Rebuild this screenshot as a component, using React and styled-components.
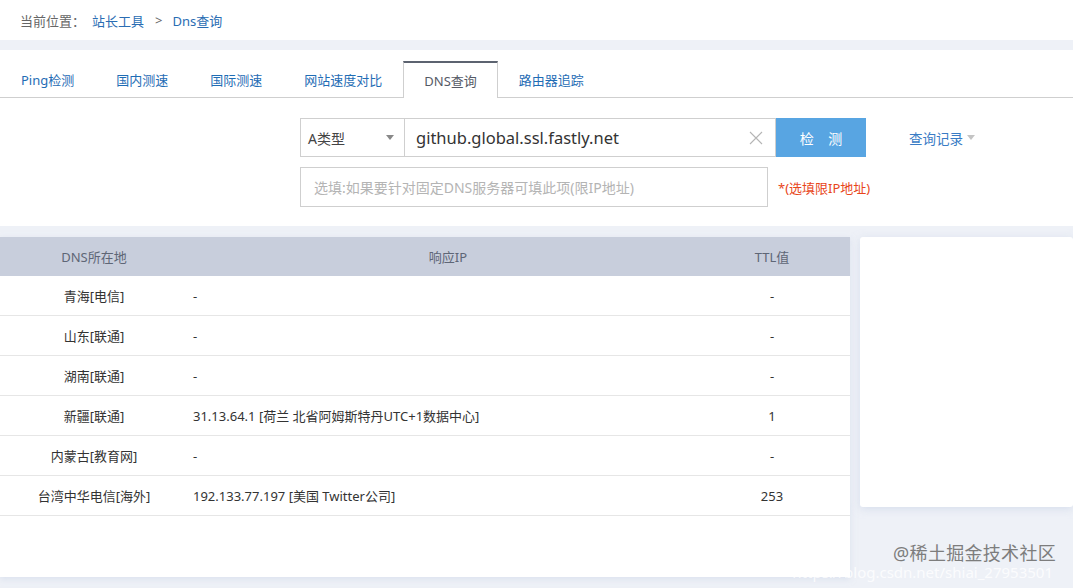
import React from 'react'
import styled, { createGlobalStyle } from 'styled-components'

const Global = createGlobalStyle`
    html, body {
        margin : 0;
        padding : 0;
        background : #eef1f7;
        font-family : "Noto Sans", "Noto Sans CJK SC", sans-serif;
        font-size : 13px;
        color : #333;
    }
`

const tabs = ['Ping检测', '国内测速', '国际测速', '网站速度对比', 'DNS查询', '路由器追踪']

const rows = [
    { loc: '青海[电信]', ip: '-', ttl: '-' },
    { loc: '山东[联通]', ip: '-', ttl: '-' },
    { loc: '湖南[联通]', ip: '-', ttl: '-' },
    { loc: '新疆[联通]', ip: '31.13.64.1 [荷兰 北省阿姆斯特丹UTC+1数据中心]', ttl: '1' },
    { loc: '内蒙古[教育网]', ip: '-', ttl: '-' },
    { loc: '台湾中华电信[海外]', ip: '192.133.77.197 [美国 Twitter公司]', ttl: '253' },
]

function App() {
    return (
        <Page>
            <Global />
            <Crumbs>
                <CrumbLabel>当前位置：</CrumbLabel>
                <CrumbLink>站长工具</CrumbLink>
                <CrumbSep>&gt;</CrumbSep>
                <CrumbLink>Dns查询</CrumbLink>
            </Crumbs>

            <ToolPanel>
                <TabBar>
                    {tabs.map(t => (
                        <Tab key={t} active={t === 'DNS查询'}>{t}</Tab>
                    ))}
                </TabBar>
                <Form>
                    <FormRow>
                        <TypeSelect>
                            A类型
                            <Caret />
                        </TypeSelect>
                        <HostInput>
                            <HostText>github.global.ssl.fastly.net</HostText>
                            <svg width="14" height="14" viewBox="0 0 14 14">
                                <path d="M1 1 L13 13 M13 1 L1 13" stroke="#b5b5b5" strokeWidth="1.1" fill="none" />
                            </svg>
                        </HostInput>
                        <CheckButton>检&nbsp;&nbsp;&nbsp;&nbsp;测</CheckButton>
                        <History>
                            查询记录
                            <Caret light />
                        </History>
                    </FormRow>
                    <FormRow>
                        <ServerInput>选填:如果要针对固定DNS服务器可填此项(限IP地址)</ServerInput>
                        <Hint>*(选填限IP地址)</Hint>
                    </FormRow>
                </Form>
            </ToolPanel>

            <Results>
                <TablePanel>
                    <HeadRow>
                        <HeadCell>DNS所在地</HeadCell>
                        <HeadCell>响应IP</HeadCell>
                        <HeadCell>TTL值</HeadCell>
                    </HeadRow>
                    {rows.map(r => (
                        <BodyRow key={r.loc}>
                            <Cell>{r.loc}</Cell>
                            <Cell left>{r.ip}</Cell>
                            <Cell>{r.ttl}</Cell>
                        </BodyRow>
                    ))}
                </TablePanel>
                <SidePanel />
                <Watermark>
                    <Url>https://blog.csdn.net/shiai_27953501</Url>
                    <Mark>@稀土掘金技术社区</Mark>
                </Watermark>
            </Results>
        </Page>
    )
}

export default App

const Page = styled.div`
    width : 1073px;
    height : 588px;
    overflow : hidden;
`

const Crumbs = styled.div`
    height : 40px;
    background : #fff;
    display : flex;
    align-items : center;
    padding-left : 20px;
    margin-bottom : 10px;
`

const CrumbLabel = styled.span`
    color : #666;
    margin-right : 7px;
`

const CrumbLink = styled.span`
    color : #2a6db3;
`

const CrumbSep = styled.span`
    color : #666;
    margin : 0 10px 0 11px;
`

const ToolPanel = styled.div`
    background : #fff;
    height : 176px;
    padding-top : 11px;
    box-sizing : border-box;
    margin-bottom : 11px;
`

const TabBar = styled.div`
    display : flex;
    height : 36px;
    border-bottom : 1px solid #cfcfcf;
`

const Tab = styled.div`
    padding : 0 21px 0 21px;
    display : flex;
    align-items : center;
    font-size : 13px;
    box-sizing : border-box;
    height : 36px;
    color : ${p => p.active ? '#555a66' : '#1f6db5'};
    background : #fff;
    ${p => p.active && `
        border-top : 2px solid #5c6370;
        border-left : 1px solid #cfcfcf;
        border-right : 1px solid #cfcfcf;
        height : 37px;
        margin-bottom : -1px;
        padding : 0 20px;
    `}
`

const Form = styled.div`
    padding : 20px 0 0 300px;
    display : flex;
    flex-direction : column;
    gap : 10px;
`

const FormRow = styled.div`
    display : flex;
    align-items : center;
`

const TypeSelect = styled.div`
    width : 105px;
    height : 39px;
    box-sizing : border-box;
    border : 1px solid #cfcfcf;
    display : flex;
    align-items : center;
    justify-content : space-between;
    padding : 0 10px 0 7px;
    font-size : 14px;
    color : #444;
`

const Caret = styled.span`
    width : 0;
    height : 0;
    border-left : 4px solid transparent;
    border-right : 4px solid transparent;
    border-top : 5px solid ${p => p.light ? '#c4c4c4' : '#888'};
    margin-left : ${p => p.light ? '4px' : '0'};
`

const HostInput = styled.div`
    width : 371px;
    height : 39px;
    box-sizing : border-box;
    border : 1px solid #cfcfcf;
    border-left : none;
    display : flex;
    align-items : center;
    justify-content : space-between;
    padding : 0 12px 0 11px;
`

const HostText = styled.span`
    font-size : 16.5px;
    color : #333;
`

const CheckButton = styled.div`
    width : 90px;
    height : 39px;
    background : #58a5e2;
    color : #fff;
    font-size : 14px;
    display : flex;
    align-items : center;
    justify-content : center;
`

const History = styled.div`
    margin-left : 43px;
    color : #3a7cc5;
    font-size : 13.5px;
    display : flex;
    align-items : center;
`

const ServerInput = styled.div`
    width : 468px;
    height : 40px;
    box-sizing : border-box;
    border : 1px solid #cfcfcf;
    display : flex;
    align-items : center;
    padding-left : 13px;
    color : #b4b4b4;
    font-size : 14px;
`

const Hint = styled.span`
    margin-left : 10px;
    color : #e8461a;
    font-size : 13px;
`

const Results = styled.div`
    position : relative;
    display : flex;
    align-items : flex-start;
    gap : 10px;
`

const TablePanel = styled.div`
    width : 850px;
    height : 340px;
    background : #fff;
    box-shadow : 0 2px 6px rgba(200, 210, 230, 0.5);
`

const grid = `
    display : grid;
    grid-template-columns : 188px 520px 128px 1fr;
`

const HeadRow = styled.div`
    ${grid}
    height : 39px;
    background : #c8cedc;
`

const HeadCell = styled.div`
    display : flex;
    align-items : center;
    justify-content : center;
    color : #5e6676;
    font-size : 13px;
`

const BodyRow = styled.div`
    ${grid}
    height : 40px;
    border-bottom : 1px solid #e6e6e6;
    box-sizing : border-box;
`

const Cell = styled.div`
    display : flex;
    align-items : center;
    justify-content : ${p => p.left ? 'flex-start' : 'center'};
    padding-left : ${p => p.left ? '5px' : '0'};
    color : #333;
    font-size : 13px;
`

const SidePanel = styled.div`
    flex : 1;
    height : 270px;
    background : #fff;
    border-radius : 3px;
    box-shadow : 0 2px 8px rgba(200, 210, 230, 0.6);
`

const Watermark = styled.div`
    position : absolute;
    right : 0;
    top : 302px;
    width : 280px;
    height : 46px;
`

const Mark = styled.div`
    position : absolute;
    right : 17px;
    top : 0;
    font-size : 18px;
    color : #7d7d7d;
    letter-spacing : 0.3px;
`

const Url = styled.div`
    position : absolute;
    right : 20px;
    top : 23px;
    font-size : 15px;
    color : rgba(255, 255, 255, 0.8);
    white-space : nowrap;
`
